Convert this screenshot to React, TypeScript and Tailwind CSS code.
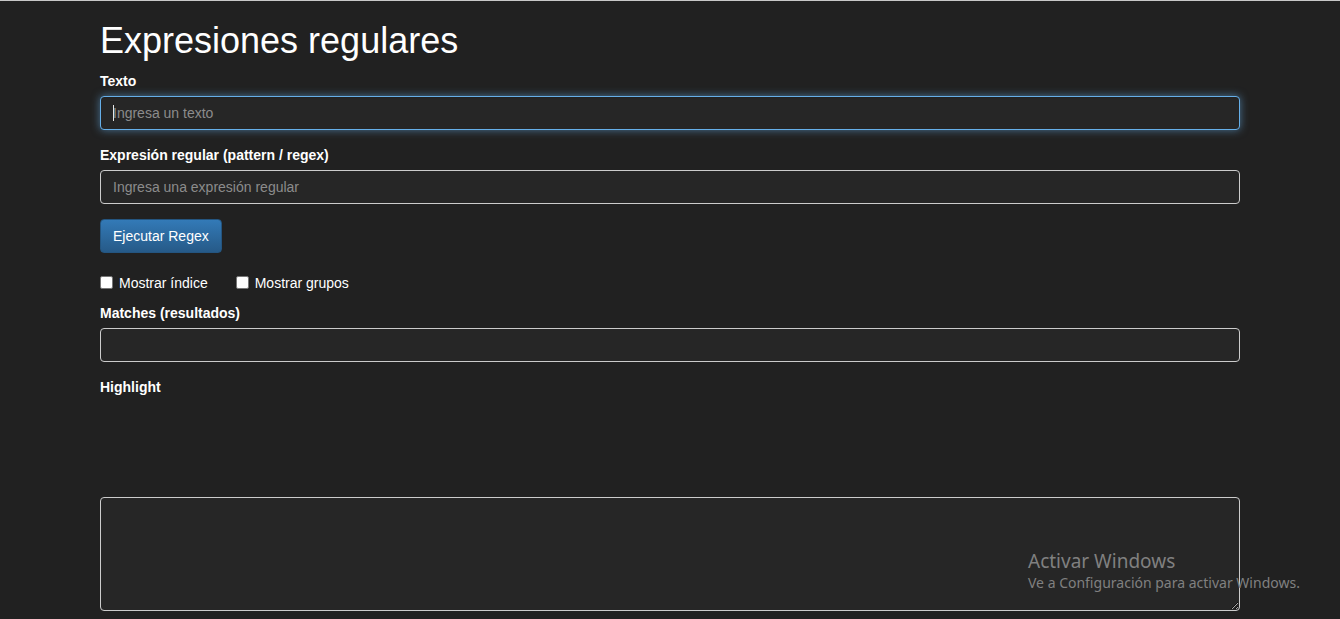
import { useState } from "react";

const fieldCore =
  "block w-full h-[34px] px-3 py-[6px] text-[14px] leading-[20px] text-[#e6e6e6] bg-[#262626] border rounded-[4px] outline-none placeholder:text-[#8c8c8c]";

export default function App() {
  const [texto, setTexto] = useState("");
  const [pattern, setPattern] = useState("");

  return (
    <div className="relative min-h-screen bg-[#212121] border-t border-[#c8c8c8] font-['Liberation_Sans',Arial,sans-serif] text-[14px] leading-[20px] text-white">
      <div className="mx-auto w-[1170px] px-[15px]">
        <h1 className="mt-5 mb-[10px] text-[36px] leading-[1.1] font-normal text-white">
          Expresiones regulares
        </h1>

        <div className="mb-[15px]">
          <label className="mb-[5px] inline-block font-bold">Texto</label>
          <div className="relative">
            <input
              value={texto}
              onChange={(e) => setTexto(e.target.value)}
              placeholder="Ingresa un texto"
              className={`${fieldCore} border-[#66afe9] shadow-[inset_0_1px_1px_rgba(0,0,0,0.075),0_0_8px_rgba(102,175,233,0.6)]`}
            />
            {/* caret */}
            <span className="absolute left-[13px] top-[9px] h-[16px] w-px bg-[#e6e6e6]" />
          </div>
        </div>

        <div className="mb-[15px]">
          <label className="mb-[5px] inline-block font-bold">
            Expresión regular (pattern / regex)
          </label>
          <input
            value={pattern}
            onChange={(e) => setPattern(e.target.value)}
            placeholder="Ingresa una expresión regular"
            className={`${fieldCore} border-[#cccccc]`}
          />
        </div>

        <button className="h-[34px] px-3 rounded-[4px] border border-[#245580] bg-gradient-to-b from-[#337ab7] to-[#265a88] text-[14px] text-white">
          Ejecutar Regex
        </button>

        <div className="mt-5 mb-[10px] flex items-center gap-7">
          <label className="flex items-center gap-[6px]">
            <span className="block h-[13px] w-[13px] rounded-[2px] border border-[#767676] bg-white" />
            Mostrar índice
          </label>
          <label className="flex items-center gap-[6px]">
            <span className="block h-[13px] w-[13px] rounded-[2px] border border-[#767676] bg-white" />
            Mostrar grupos
          </label>
        </div>

        <div className="mb-[15px]">
          <label className="mb-[5px] inline-block font-bold">Matches (resultados)</label>
          <div className="h-[34px] w-full rounded-[4px] border border-[#cccccc] bg-[#262626]" />
        </div>

        <div>
          <label className="mb-[5px] inline-block font-bold">Highlight</label>
          <div className="mb-[15px] h-[80px]" />
          <textarea
            rows={5}
            className="block w-full h-[114px] px-3 py-[6px] text-[14px] leading-[20px] text-[#e6e6e6] bg-[#262626] border border-[#cccccc] rounded-[4px] outline-none"
          />
        </div>
      </div>

      {/* OS watermark */}
      <div className="pointer-events-none absolute left-[1028px] top-[547px] font-['Noto_Sans',sans-serif] text-[#808080]">
        <div className="text-[19px] leading-[26px]">Activar Windows</div>
        <div className="text-[14px] leading-[18px]">Ve a Configuración para activar Windows.</div>
      </div>
    </div>
  );
}
